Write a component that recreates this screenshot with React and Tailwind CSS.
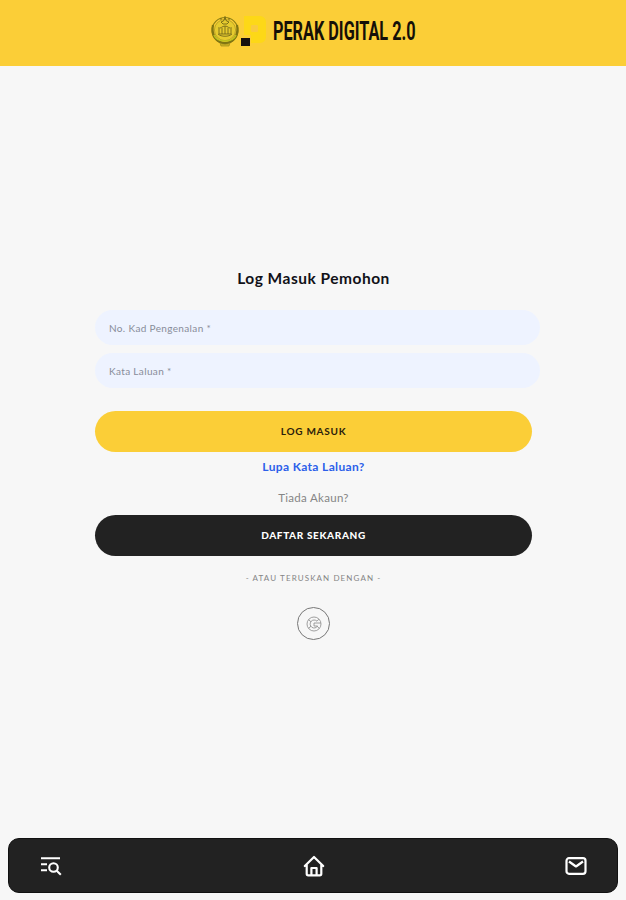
import React from 'react';

const StateCrest = () => (
  <svg width="30" height="36" viewBox="0 0 30 36" fill="none" className="shrink-0">
    <circle cx="15" cy="17.5" r="13" stroke="#8f8114" strokeWidth="1.2" />
    <circle cx="15" cy="17" r="10.6" fill="#e6cb2e" stroke="#a89520" strokeWidth="0.7" />
    <path d="M3 12c-2 9 3 18 12 18s14-9 12-18" stroke="#807512" strokeWidth="2.2" />
    <path d="M4 22c3 8 19 8 22 0" stroke="#bdc51e" strokeWidth="1.4" />
    <path d="M8 15c3 1 4-2 7-2s4 3 7 2M9 16v5h12v-5M12 15v6M15 13v8M18 15v6M8 21c3 3 11 3 14 0" stroke="#75691a" strokeWidth="0.9" />
    <path d="M11 9l2 2h4l2-2-2.5-1L15 5l-1.5 3zM15 3v3M10 6h2M18 6h2" stroke="#706515" strokeWidth="0.9" />
    <path d="M10 30c3 2 7 2 10 0l-1 3h-8z" fill="#d1b51f" stroke="#9b8b1e" strokeWidth="0.7" />
  </svg>
);

const DigitalMark = () => (
  <svg width="28" height="36" viewBox="0 0 28 36" className="shrink-0">
    <path d="M4 3h16a6 6 0 0 1 6 6v15a6 6 0 0 1-6 6h-9v-8H4z" fill="#fdd817" />
    <rect x="11" y="12" width="7" height="7" rx="1" fill="#facb3d" />
    <rect x="1" y="25" width="9" height="8" fill="#17110e" />
  </svg>
);

const GoogleIcon = () => (
  <svg width="16" height="16" viewBox="0 0 16 16" fill="none" stroke="#888" strokeWidth="0.8">
    <circle cx="8" cy="8" r="7" />
    <path d="M11 5.2A4 4 0 1 0 11.6 10H8V7h6.8" />
    <path d="M2.5 3.8l2.6 2M2.5 12.2l2.6-2M11.2 10.3l2 2M11 5.2l1.8-2" />
  </svg>
);

const SearchListIcon = () => (
  <svg width="22" height="20" viewBox="0 0 22 20" fill="none" stroke="#fff" strokeWidth="2.1">
    <path d="M1 2.2h19M1 8.2h6M1 14.2h6" />
    <circle cx="13.5" cy="11.5" r="4.3" />
    <path d="M16.7 14.7l4.1 4" />
  </svg>
);

const HomeIcon = () => (
  <svg width="22" height="22" viewBox="0 0 22 22" fill="none" stroke="#fff" strokeWidth="2.2" strokeLinejoin="round" strokeLinecap="round">
    <path d="M1.8 11L11 2l9.2 9M3.7 10v8.8a1.5 1.5 0 0 0 1.5 1.5h11.6a1.5 1.5 0 0 0 1.5-1.5V10" />
    <path d="M8.4 20v-7h5.2v7" />
  </svg>
);

const MailIcon = () => (
  <svg width="22" height="18" viewBox="0 0 22 18" fill="none" stroke="#fff" strokeWidth="2.2" strokeLinejoin="round">
    <rect x="1.5" y="1.2" width="19" height="15.6" rx="2.5" />
    <path d="M4 4.5l7 5 7-5" />
  </svg>
);

const Field = ({ type, placeholder }) => (
  <input
    type={type}
    placeholder={placeholder}
    className="block h-[35px] w-[445px] rounded-full bg-[#eef3ff] px-[14px] text-[10px] tracking-[0.35px] outline-none placeholder:text-[#888c99]"
  />
);

const App = () => {
  return (
    <div className="flex h-[900px] w-full flex-col bg-[#f7f7f7] font-['Lato',sans-serif]">
      <header className="flex h-[66px] shrink-0 items-start bg-[#fbce37] pt-[13px] pl-[210px]">
        <StateCrest />
        <DigitalMark />
        <h1 className="ml-[5px] h-9 w-[143px] origin-left scale-x-[0.65] whitespace-nowrap font-['Roboto',sans-serif] text-[25px] leading-[37px] font-bold text-[#151008]">
          PERAK DIGITAL 2.0
        </h1>
      </header>

      <main className="flex flex-1 flex-col pt-[202px] pl-[95px]">
        <h2 className="w-[437px] text-center text-[15.5px] leading-5 font-bold tracking-[0.5px] text-[#111118]">
          Log Masuk Pemohon
        </h2>
        <form className="mt-[22px] flex flex-col gap-2">
          <Field type="text" placeholder="No. Kad Pengenalan *" />
          <Field type="password" placeholder="Kata Laluan *" />
          <button
            type="button"
            className="mt-[15px] h-[41px] w-[437px] rounded-full bg-[#fbce37] text-[10px] font-bold tracking-[0.75px] text-[#2b210b]"
          >
            LOG MASUK
          </button>
        </form>
        <a href="#" className="mt-[7px] w-[437px] text-center text-[12px] leading-4 font-bold tracking-[0.35px] text-[#2c60ea]">
          Lupa Kata Laluan?
        </a>
        <p className="mt-[15px] w-[437px] text-center text-[11.5px] leading-4 tracking-[0.3px] text-[#858585]">
          Tiada Akaun?
        </p>
        <button
          type="button"
          className="mt-[9px] h-[41px] w-[437px] rounded-full bg-[#222] text-[10px] font-black tracking-[0.65px] text-white"
        >
          DAFTAR SEKARANG
        </button>
        <p className="mt-[14px] w-[437px] text-center text-[8px] leading-4 tracking-[1.1px] text-[#858585]">
          - ATAU TERUSKAN DENGAN -
        </p>
        <div className="mt-[21px] flex w-[437px] justify-center">
          <button type="button" className="flex size-[33px] items-center justify-center rounded-full border border-[#777]">
            <GoogleIcon />
          </button>
        </div>
      </main>

      <nav className="mx-2 mb-[7px] flex h-[55px] shrink-0 items-center justify-between rounded-[11px] border border-[#111] bg-[#222] pr-[30px] pl-[31px]">
        <SearchListIcon />
        <HomeIcon />
        <MailIcon />
      </nav>
    </div>
  );
};

export default App;
